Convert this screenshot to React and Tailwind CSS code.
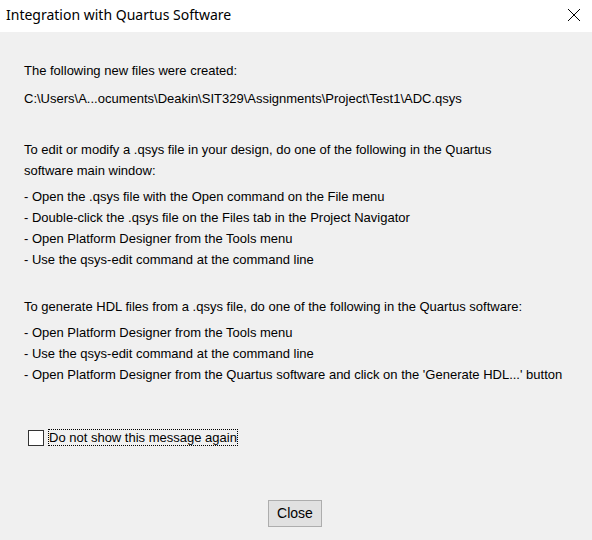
export default function App() {
  const editSteps = [
    "- Open the .qsys file with the Open command on the File menu",
    "- Double-click the .qsys file on the Files tab in the Project Navigator",
    "- Open Platform Designer from the Tools menu",
    "- Use the qsys-edit command at the command line",
  ];
  const hdlSteps = [
    "- Open Platform Designer from the Tools menu",
    "- Use the qsys-edit command at the command line",
    "- Open Platform Designer from the Quartus software and click on the 'Generate HDL...' button",
  ];

  return (
    <div className="flex h-[540px] w-[592px] flex-col bg-[#f0f0f0] text-black">
      <div className="flex h-[32px] items-center justify-between bg-white pl-[6px] pr-[10px]">
        <span className="-mt-[2px] font-['Noto_Sans',sans-serif] text-[14px] leading-none">Integration with Quartus Software</span>
        <svg width="14" height="14" viewBox="0 0 14 14" className="-mt-[2px] mr-[1px]">
          <path d="M1 1L13 13M13 1L1 13" stroke="#000" strokeWidth="1" />
        </svg>
      </div>

      <div className="flex flex-1 flex-col px-[24px] pt-[28px] font-['Liberation_Sans',sans-serif] text-[13px] leading-[21px]">
        <p>The following new files were created:</p>
        <p className="mt-[7px]">C:\Users\A...ocuments\Deakin\SIT329\Assignments\Project\Test1\ADC.qsys</p>

        <p className="mt-[30px] w-[480px]">
          To edit or modify a .qsys file in your design, do one of the following in the Quartus software main window:
        </p>
        <ul className="mt-[5px]">
          {editSteps.map((s) => (
            <li key={s}>{s}</li>
          ))}
        </ul>

        <p className="mt-[26px]">To generate HDL files from a .qsys file, do one of the following in the Quartus software:</p>
        <ul className="mt-[5px]">
          {hdlSteps.map((s) => (
            <li key={s}>{s}</li>
          ))}
        </ul>

        <label className="mt-[44px] ml-[4px] flex items-center gap-[4px]">
          <span className="h-[16px] w-[16px] border border-[#333] bg-white" />
          <span className="border border-dotted border-black leading-[15px]">Do not show this message again</span>
        </label>

        <div className="mt-[54px] flex justify-center">
          <button className="-ml-[2px] h-[27px] w-[54px] border border-[#adadad] bg-[#e1e1e1] text-[14px]">Close</button>
        </div>
      </div>
    </div>
  );
}
